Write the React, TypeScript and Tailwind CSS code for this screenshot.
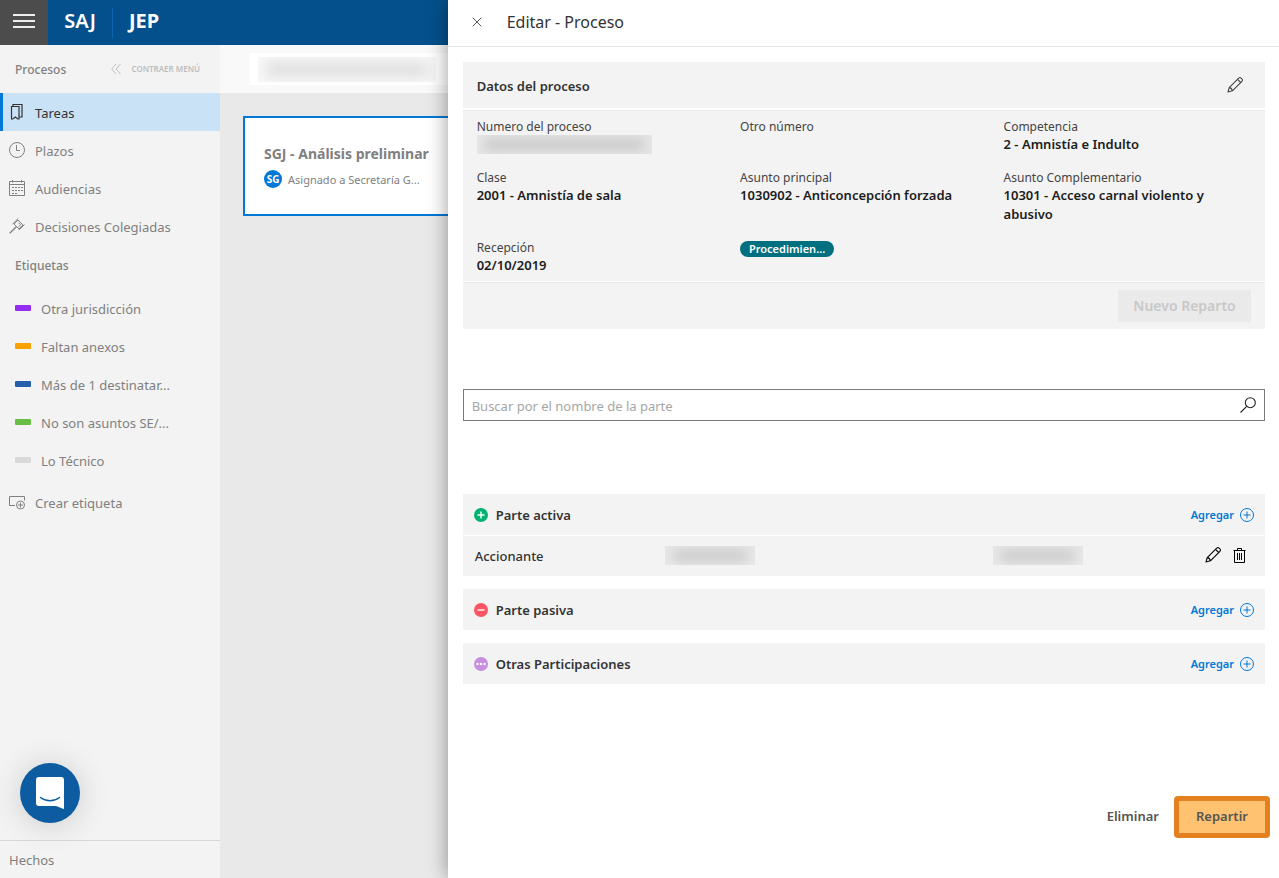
import { useState } from 'react'
import type { ReactNode } from 'react'
import clsx from 'clsx'

interface IconProps { className?: string }

function BookmarksIcon({ className }: IconProps) {
  return (
    <svg viewBox="0 0 16 16" className={className} fill="none" stroke="currentColor" strokeWidth="1.200">
      <path d="M2.500 2.500h7.500v12.500h-1.200l-2.500-2-2.500 2H2.500z" />
      <path d="M4 2.500v-2h9v12.500h-3" />
    </svg>
  )
}

function ClockIcon({ className }: IconProps) {
  return (
    <svg viewBox="0 0 16 16" className={className} fill="none" stroke="currentColor" strokeWidth="1">
      <circle cx="8" cy="8" r="7.500" />
      <path d="M7.500 3v5.500H11" />
    </svg>
  )
}

function CalendarIcon({ className }: IconProps) {
  return (
    <svg viewBox="0 0 16 16" className={className} fill="none" stroke="currentColor" strokeWidth="1">
      <path d="M.5 1.500h15v14H.5zM.5 4.500h15M3.500 0v2.500M12.500 0v2.500" />
      <path d="M3 7.500h11M3 10.500h11M3 13.500h5" strokeDasharray="2 1" />
    </svg>
  )
}

function GavelIcon({ className }: IconProps) {
  return (
    <svg viewBox="0 0 16 16" className={className} fill="none" stroke="currentColor" strokeWidth="1">
      <path d="M9 2l5 5-4 4-5-5z" />
      <path d="M3.500 6.200L9.200.5M9.800 12.200l5.700-5.700M9.500 4.800l2 2-2 2" />
      <path d="M7.500 8.500L.7 15.300" strokeWidth="1.300" />
    </svg>
  )
}

function TagAddIcon({ className }: IconProps) {
  return (
    <svg viewBox="0 0 16 14" className={className} fill="none" stroke="currentColor" strokeWidth="1">
      <path d="M6 9.500H.5V.5h15v4" />
      <circle cx="11.500" cy="9" r="4" />
      <path d="M11.500 6.500v5M9 9h5" />
    </svg>
  )
}

function PencilIcon({ className }: IconProps) {
  return (
    <svg viewBox="0 0 16 16" className={className} fill="none" stroke="currentColor" strokeWidth="1.100" strokeLinejoin="round">
      <path d="M1 15l1.200-4.400L11.700 1.100a1.600 1.600 0 0 1 2.400 0l.8.8a1.600 1.600 0 0 1 0 2.400L5.400 13.800z" />
      <path d="M10.500 2.300l3.200 3.200M2.200 10.600c1.500.1 2.900 1.500 3.200 3.200" />
    </svg>
  )
}

function TrashIcon({ className }: IconProps) {
  return (
    <svg viewBox="0 0 13 16" className={className} fill="none" stroke="currentColor" strokeWidth="1">
      <path d="M.5 3.500h12M1.500 3.500v12h10v-12M4.500 3.500v-2h4v2" />
      <path d="M4.500 6v7M6.500 6v7M8.500 6v7" />
    </svg>
  )
}

function SearchIcon({ className }: IconProps) {
  return (
    <svg viewBox="0 0 16 16" className={className} fill="none" stroke="currentColor" strokeWidth="1.100">
      <circle cx="10.300" cy="5.700" r="5" />
      <path d="M6.700 9.300.5 15.500" />
    </svg>
  )
}

function CloseIcon({ className }: IconProps) {
  return (
    <svg viewBox="0 0 10 10" className={className} fill="none" stroke="currentColor" strokeWidth="1">
      <path d="M.7.7l8.600 8.600M9.300.7.7 9.300" />
    </svg>
  )
}

function AddIcon({ className }: IconProps) {
  return (
    <svg viewBox="0 0 14 14" className={className} fill="none" stroke="currentColor" strokeWidth="1">
      <circle cx="7" cy="7" r="6.500" />
      <path d="M7 3.500v7M3.500 7h7" />
    </svg>
  )
}

function CollapseIcon({ className }: IconProps) {
  return (
    <svg viewBox="0 0 10 10" className={className} fill="none" stroke="currentColor" strokeWidth="1">
      <path d="M5 0 .7 5 5 10M9.500 0 5.200 5l4.300 5" />
    </svg>
  )
}

type PartKind = 'active' | 'passive' | 'other'

const partColors: Record<PartKind, string> = {
  active: 'text-[#00b371]',
  passive: 'text-[#ff5463]',
  other: 'text-[#c78fdd]',
}

function PartIcon({ kind }: { kind: PartKind }) {
  return (
    <svg viewBox="0 0 14 14" className={clsx('size-3.5', partColors[kind])}>
      <circle cx="7" cy="7" r="7" fill="currentColor" />
      {kind === 'active' && <path d="M7 3.500v7M3.500 7h7" stroke="#fff" strokeWidth="1.400" />}
      {kind === 'passive' && <path d="M3.500 7h7" stroke="#fff" strokeWidth="1.400" />}
      {kind === 'other' && (
        <g fill="#fff">
          <circle cx="3.500" cy="7" r="1.200" />
          <circle cx="7" cy="7" r="1.200" />
          <circle cx="10.500" cy="7" r="1.200" />
        </g>
      )}
    </svg>
  )
}

const menuItems = [
  { label: 'Tareas', icon: BookmarksIcon },
  { label: 'Plazos', icon: ClockIcon },
  { label: 'Audiencias', icon: CalendarIcon },
  { label: 'Decisiones Colegiadas', icon: GavelIcon },
]

const tags = [
  { label: 'Otra jurisdicción', color: 'bg-[#962cf0]' },
  { label: 'Faltan anexos', color: 'bg-[#f9a100]' },
  { label: 'Más de 1 destinatar...', color: 'bg-[#245ead]' },
  { label: 'No son asuntos SE/...', color: 'bg-[#67bd45]' },
  { label: 'Lo Técnico', color: 'bg-[#d8d8d8]' },
]

// Hides personal data behind a smudge
function Redacted({ className, tone = 'bg-[#c8c8c8]' }: { className: string; tone?: string }) {
  return (
    <div className={clsx('overflow-hidden px-2 py-1', className)}>
      <div className={clsx('h-full blur-[6px]', tone)} />
    </div>
  )
}

function Sidebar() {
  const [active, setActive] = useState('Tareas')

  return (
    <aside className="w-[220px] shrink-0 flex flex-col bg-[#f3f3f3] text-[#808080]">
      <div className="h-12 pl-[15px] pr-5 flex items-center justify-between">
        <h2 className="pt-0.5 text-xs font-medium">Procesos</h2>
        <button type="button" className="flex items-center gap-2.5 text-[8px] font-semibold text-[#bdbdbd]">
          <CollapseIcon className="size-2.5" />
          CONTRAER MENÚ
        </button>
      </div>
      <nav>
        {menuItems.map(({ label, icon: Icon }) => (
          <a
            key={label}
            href="#"
            onClick={() => setActive(label)}
            className={clsx(
              'h-[38px] pl-1.5 flex items-center gap-2.5 text-[13px] border-l-3',
              active === label ? 'bg-[#cae2f6] border-[#0078d7] text-[#333]' : 'border-transparent',
            )}
          >
            <Icon className="size-4" />
            <span className="pt-1">{label}</span>
          </a>
        ))}
      </nav>
      <h2 className="h-[42px] mb-[3px] pl-[15px] flex items-center text-xs font-medium">Etiquetas</h2>
      <ul>
        {tags.map((tag) => (
          <li key={tag.label}>
            <a href="#" className="h-[38px] pl-[15px] flex items-center gap-2.5 text-[13px]">
              <span className={clsx('w-4 h-1.5 mb-0.5 rounded-[1px]', tag.color)} />
              <span className="pt-0.5">{tag.label}</span>
            </a>
          </li>
        ))}
      </ul>
      <button type="button" className="h-[38px] mt-1 pl-[9px] flex items-center gap-2.5 text-[13px]">
        <TagAddIcon className="w-4 h-3.5" />
        <span className="pt-0.5">Crear etiqueta</span>
      </button>
      <a href="#" className="h-[38px] mt-auto pl-[9px] pt-0.5 flex items-center border-t border-[#d8d8d8] text-[13px]">
        Hechos
      </a>
    </aside>
  )
}

function Board() {
  return (
    <main className="flex-1 bg-[#e9e9e9]">
      <div className="h-12 pl-[30px] flex items-center bg-[#f9f9f9]">
        <div className="w-full h-8 pl-2 flex items-center bg-white">
          <Redacted className="w-[178px] h-[25px] bg-[#f8f8f8]" tone="bg-[#e2e2e2]" />
        </div>
      </div>
      <div className="w-[320px] h-[100px] mt-[23px] ml-[23px] pl-[19px] pt-7 border-2 border-[#0078d7] bg-white text-[#808080]">
        <h3 className="text-sm leading-4 font-bold">SGJ - Análisis preliminar</h3>
        <div className="mt-2 flex items-center gap-1.5 text-[11px]">
          <span className="size-[18px] flex items-center justify-center rounded-full bg-[#0078d7] text-white text-[10px] font-bold">SG</span>
          <span className="pt-0.5">Asignado a Secretaría G...</span>
        </div>
      </div>
    </main>
  )
}

function Field({ label, children }: { label: string; children?: ReactNode }) {
  return (
    <div className="pr-9">
      <dt className="text-xs leading-4 text-[#444]">{label}</dt>
      <dd className="text-[13px] leading-[19px] font-semibold text-[#1c1c1c]">{children}</dd>
    </div>
  )
}

function ProcessCard() {
  return (
    <section className="bg-[#f3f3f3]">
      <div className="h-12 pl-3.5 pr-[22px] flex items-center justify-between border-b-2 border-white">
        <h2 className="pt-1 text-[13px] font-semibold text-[#333]">Datos del proceso</h2>
        <button type="button" aria-label="Editar datos del proceso" className="text-[#444]">
          <PencilIcon className="size-4" />
        </button>
      </div>
      <dl className="pl-3.5 pt-2 pb-1.5 grid grid-cols-3 gap-x-0.5 border-t border-[#e8e8e8]">
        <div className="h-[51px]">
          <dt className="text-xs leading-4 text-[#444]">Numero del proceso</dt>
          <dd><Redacted className="w-[175px] h-[19px] bg-[#e6e6e6]" /></dd>
        </div>
        <Field label="Otro número" />
        <Field label="Competencia">2 - Amnistía e Indulto</Field>
        <div className="h-[70px]">
          <Field label="Clase">2001 - Amnistía de sala</Field>
        </div>
        <Field label="Asunto principal">1030902 - Anticoncepción forzada</Field>
        <Field label="Asunto Complementario">10301 - Acceso carnal violento y abusivo</Field>
        <Field label="Recepción">02/10/2019</Field>
        <div className="flex items-start pt-px">
          <span className="h-4 w-[94px] flex items-center justify-center rounded-full bg-[#007080] text-[11px] font-semibold text-white">
            Procedimien...
          </span>
        </div>
      </dl>
      <div className="border-t border-white">
        <div className="h-[47px] pr-3.5 flex items-center justify-end border-t border-[#e8e8e8]">
          <button type="button" disabled className="h-8 w-[133px] bg-[#eaeaea] text-sm font-semibold text-[#c8c8c8]">
            Nuevo Reparto
          </button>
        </div>
      </div>
    </section>
  )
}

function PartSection({ kind, title, children }: { kind: PartKind; title: string; children?: ReactNode }) {
  return (
    <section>
      <div className="h-[41px] px-[11px] flex items-center gap-2 bg-[#f3f3f3]">
        <PartIcon kind={kind} />
        <h2 className="flex-1 pt-0.5 text-[13px] font-semibold text-[#333]">{title}</h2>
        <button type="button" className="flex items-center gap-1.5 text-[11px] font-semibold text-[#0078d7]">
          <span className="pt-0.5">Agregar</span>
          <AddIcon className="size-3.5" />
        </button>
      </div>
      {children}
    </section>
  )
}

function EditDrawer() {
  const [query, setQuery] = useState('')

  return (
    <div role="dialog" aria-label="Editar proceso" className="absolute inset-y-0 right-0 w-[65%] flex flex-col bg-white shadow-[0_0_20px_rgba(0,0,0,0.4)]">
      <header className="h-[47px] pl-6 pb-0.5 flex items-center gap-[25px] border-b border-[#e8e8e8]">
        <button type="button" aria-label="Cerrar" className="text-[#555]">
          <CloseIcon className="size-2.5" />
        </button>
        <h1 className="text-base text-[#333]">Editar - Proceso</h1>
      </header>

      <div className="pl-[15px] pr-3.5 pt-[15px] flex flex-col">
        <ProcessCard />

        <div className="mt-[60px] mb-[73px] h-8 flex items-center border border-[#7a7a7a] px-2">
          <input
            type="text"
            aria-label="Buscar por el nombre de la parte"
            placeholder="Buscar por el nombre de la parte"
            value={query}
            onChange={(e) => setQuery(e.target.value)}
            className="flex-1 pt-1 text-[13px] outline-none placeholder:text-[#a6a6a6]"
          />
          <button type="button" aria-label="Buscar" className="text-[#222]">
            <SearchIcon className="size-4" />
          </button>
        </div>

        <div className="flex flex-col gap-[13px]">
          <PartSection kind="active" title="Parte activa">
            <div className="h-10 mt-px pl-3 pr-[19px] pb-0.5 flex items-center bg-[#f3f3f3]">
              <span className="w-[190px] pt-1 text-[13px] font-medium text-[#333]">Accionante</span>
              <Redacted className="w-[90px] h-[19px] bg-[#e8e8e8]" />
              <Redacted className="w-[90px] h-[19px] ml-[238px] bg-[#e8e8e8]" />
              <div className="ml-auto flex items-center gap-3 text-black">
                <button type="button" aria-label="Editar accionante"><PencilIcon className="size-4" /></button>
                <button type="button" aria-label="Eliminar accionante"><TrashIcon className="w-[13px] h-4" /></button>
              </div>
            </div>
          </PartSection>
          <PartSection kind="passive" title="Parte pasiva" />
          <PartSection kind="other" title="Otras Participaciones" />
        </div>
      </div>

      <footer className="mt-auto pb-10 pr-[9px] flex items-center justify-end gap-[15px] text-[13px] font-semibold text-[#555]">
        <button type="button">Eliminar</button>
        <button type="button" className="h-[42px] w-24 rounded-[4px] border-5 border-[#e4801f] bg-[#ffc271]">
          Repartir
        </button>
      </footer>
    </div>
  )
}

export default function App() {
  return (
    <div className="relative min-h-screen flex flex-col overflow-hidden font-['Noto_Sans','Open_Sans',sans-serif]">
      <header className="h-[45px] flex items-center bg-[#04508c] text-white">
        <button type="button" aria-label="Menú" className="w-12 h-full pb-1 flex flex-col items-center justify-center gap-1 bg-[#4c4c4c]">
          <span className="w-[22px] h-0.5 bg-white/90" />
          <span className="w-[22px] h-0.5 bg-white/90" />
          <span className="w-[22px] h-0.5 bg-white/90" />
        </button>
        <span className="w-[65px] h-[30px] pb-1 flex items-center justify-center border-r border-[#0a64b4] text-xl font-semibold">SAJ</span>
        <span className="pl-4 pb-1 text-xl font-bold">JEP</span>
      </header>
      <div className="flex-1 flex">
        <Sidebar />
        <Board />
      </div>
      <button type="button" aria-label="Abrir chat" className="absolute left-5 bottom-[55px] size-[60px] flex items-center justify-center rounded-full bg-[#0d5ca1] shadow-[0_2px_32px_rgba(0,0,0,0.16)]">
        <svg viewBox="0 0 28 32" className="w-7 h-8">
          <path d="M3 0h22a3 3 0 0 1 3 3v29s-4.700-1.500-8-3H3a3 3 0 0 1-3-3V3a3 3 0 0 1 3-3z" fill="#fff" />
          <path d="M4.500 20.500c5.500 4.300 13.500 4.300 19 0" fill="none" stroke="#0d5ca1" strokeWidth="1.500" strokeLinecap="round" />
        </svg>
      </button>
      <EditDrawer />
    </div>
  )
}
